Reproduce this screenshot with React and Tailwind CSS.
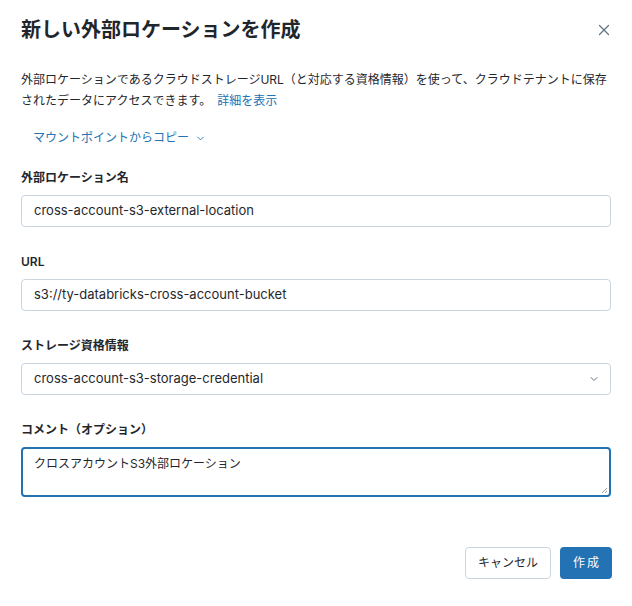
import { ChevronDown, X } from 'lucide-react';

const font = { fontFamily: '"Inter", "Noto Sans CJK JP", sans-serif' };

function Field({ label, children }) {
  return (
    <div className="flex flex-col">
      <label className="text-[12px] font-semibold text-[#1f272d] leading-5 mb-[7px]">{label}</label>
      {children}
    </div>
  );
}

export default function App() {
  return (
    <div className="w-[632px] h-[606px] bg-white text-[#1f272d]" style={font}>
      <div className="flex items-center justify-between pl-[21px] pr-[19px] pt-[16px]">
        <h1 className="text-[20px] font-bold leading-7">新しい外部ロケーションを作成</h1>
        <X className="w-[18px] h-[18px] text-[#5f7281]" strokeWidth={1.6} />
      </div>

      <p className="px-[21px] mt-[25px] text-[12px] leading-[21px] text-[#1f272d]">
        外部ロケーションであるクラウドストレージURL（と対応する資格情報）を使って、クラウドテナントに保存されたデータにアクセスできます。
        <a className="inline-block text-[#2272b4] ml-[6px]">詳細を表示</a>
      </p>

      <div className="px-[33px] mt-[17px] flex items-center gap-[6px] text-[12px] text-[#2272b4] leading-5">
        <span>マウントポイントからコピー</span>
        <ChevronDown className="w-[11px] h-[11px]" strokeWidth={2} />
      </div>

      <div className="px-[21px] mt-[20px] flex flex-col gap-[25px]">
        <Field label="外部ロケーション名">
          <div className="h-[32px] border border-[#cbd5e0] rounded-[4px] px-[12px] flex items-center text-[13px]">
            cross-account-s3-external-location
          </div>
        </Field>
        <Field label="URL">
          <div className="h-[32px] border border-[#cbd5e0] rounded-[4px] px-[12px] flex items-center text-[13px]">
            s3://ty-databricks-cross-account-bucket
          </div>
        </Field>
        <Field label="ストレージ資格情報">
          <div className="h-[32px] border border-[#cbd5e0] rounded-[4px] pl-[12px] pr-[10px] flex items-center justify-between text-[13px]">
            <span>cross-account-s3-storage-credential</span>
            <ChevronDown className="w-[12px] h-[12px] text-[#5f7281]" strokeWidth={2} />
          </div>
        </Field>
        <Field label="コメント（オプション）">
          <div className="relative h-[50px] border-2 border-[#2272b4] rounded-[4px] px-[11px] pt-[5px] text-[12px] leading-5">
            クロスアカウントS3外部ロケーション
            <svg className="absolute right-[1px] bottom-[1px]" width="7" height="7" viewBox="0 0 7 7">
              <path d="M6 1L1 6M6 4L4 6" stroke="#888" strokeWidth="0.8" />
            </svg>
          </div>
        </Field>
      </div>

      <div className="flex justify-end gap-[9px] px-[20px] mt-[50px]">
        <button className="h-[32px] px-[12px] border border-[#cbd5e0] rounded-[4px] text-[12px] text-[#1f272d] bg-white">
          キャンセル
        </button>
        <button className="h-[32px] pl-[13px] pr-[11px] rounded-[4px] text-[12px] text-white bg-[#2272b4] tracking-[2px]">
          作成
        </button>
      </div>
    </div>
  );
}
